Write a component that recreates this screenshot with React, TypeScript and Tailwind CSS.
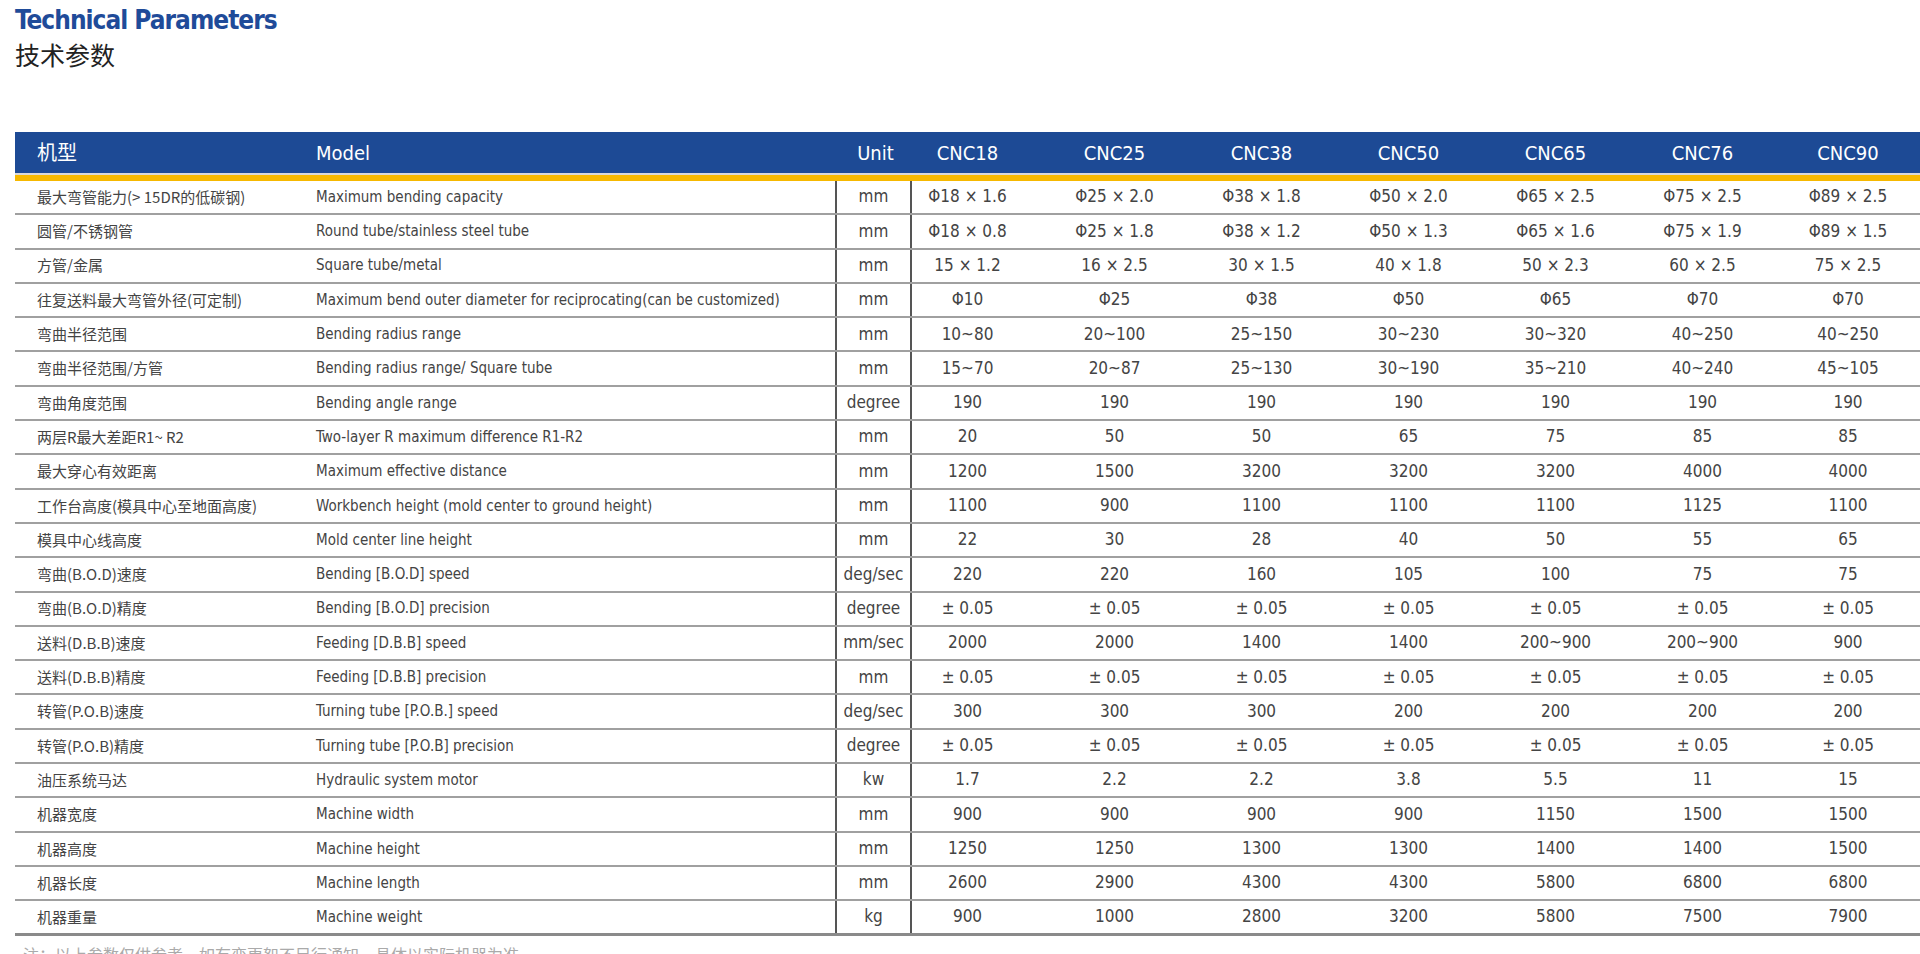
const cols = ['CNC18', 'CNC25', 'CNC38', 'CNC50', 'CNC65', 'CNC76', 'CNC90'];

const rows: [string, string, string, string[]][] = [
  ['最大弯管能力(> 15DR的低碳钢)', 'Maximum bending capacity', 'mm', ['Φ18 × 1.6', 'Φ25 × 2.0', 'Φ38 × 1.8', 'Φ50 × 2.0', 'Φ65 × 2.5', 'Φ75 × 2.5', 'Φ89 × 2.5']],
  ['圆管/不锈钢管', 'Round tube/stainless steel tube', 'mm', ['Φ18 × 0.8', 'Φ25 × 1.8', 'Φ38 × 1.2', 'Φ50 × 1.3', 'Φ65 × 1.6', 'Φ75 × 1.9', 'Φ89 × 1.5']],
  ['方管/金属', 'Square tube/metal', 'mm', ['15 × 1.2', '16 × 2.5', '30 × 1.5', '40 × 1.8', '50 × 2.3', '60 × 2.5', '75 × 2.5']],
  ['往复送料最大弯管外径(可定制)', 'Maximum bend outer diameter for reciprocating(can be customized)', 'mm', ['Φ10', 'Φ25', 'Φ38', 'Φ50', 'Φ65', 'Φ70', 'Φ70']],
  ['弯曲半径范围', 'Bending radius range', 'mm', ['10~80', '20~100', '25~150', '30~230', '30~320', '40~250', '40~250']],
  ['弯曲半径范围/方管', 'Bending radius range/ Square tube', 'mm', ['15~70', '20~87', '25~130', '30~190', '35~210', '40~240', '45~105']],
  ['弯曲角度范围', 'Bending angle range', 'degree', ['190', '190', '190', '190', '190', '190', '190']],
  ['两层R最大差距R1~ R2', 'Two-layer R maximum difference R1-R2', 'mm', ['20', '50', '50', '65', '75', '85', '85']],
  ['最大穿心有效距离', 'Maximum effective distance', 'mm', ['1200', '1500', '3200', '3200', '3200', '4000', '4000']],
  ['工作台高度(模具中心至地面高度)', 'Workbench height (mold center to ground height)', 'mm', ['1100', '900', '1100', '1100', '1100', '1125', '1100']],
  ['模具中心线高度', 'Mold center line height', 'mm', ['22', '30', '28', '40', '50', '55', '65']],
  ['弯曲(B.O.D)速度', 'Bending [B.O.D] speed', 'deg/sec', ['220', '220', '160', '105', '100', '75', '75']],
  ['弯曲(B.O.D)精度', 'Bending [B.O.D] precision', 'degree', ['± 0.05', '± 0.05', '± 0.05', '± 0.05', '± 0.05', '± 0.05', '± 0.05']],
  ['送料(D.B.B)速度', 'Feeding [D.B.B] speed', 'mm/sec', ['2000', '2000', '1400', '1400', '200~900', '200~900', '900']],
  ['送料(D.B.B)精度', 'Feeding [D.B.B] precision', 'mm', ['± 0.05', '± 0.05', '± 0.05', '± 0.05', '± 0.05', '± 0.05', '± 0.05']],
  ['转管(P.O.B)速度', 'Turning tube [P.O.B.] speed', 'deg/sec', ['300', '300', '300', '200', '200', '200', '200']],
  ['转管(P.O.B)精度', 'Turning tube [P.O.B] precision', 'degree', ['± 0.05', '± 0.05', '± 0.05', '± 0.05', '± 0.05', '± 0.05', '± 0.05']],
  ['油压系统马达', 'Hydraulic system motor', 'kw', ['1.7', '2.2', '2.2', '3.8', '5.5', '11', '15']],
  ['机器宽度', 'Machine width', 'mm', ['900', '900', '900', '900', '1150', '1500', '1500']],
  ['机器高度', 'Machine height', 'mm', ['1250', '1250', '1300', '1300', '1400', '1400', '1500']],
  ['机器长度', 'Machine length', 'mm', ['2600', '2900', '4300', '4300', '5800', '6800', '6800']],
  ['机器重量', 'Machine weight', 'kg', ['900', '1000', '2800', '3200', '5800', '7500', '7900']],
];

const grid = 'grid grid-cols-[301px_519px_77px_129px_147px_147px_147px_147px_147px_1fr]';
const font = { fontFamily: '"Liberation Sans Narrow", "DejaVu Sans Condensed", "Liberation Sans", "Noto Sans CJK SC", sans-serif' };

export default function App() {
  return (
    <div className="w-[1920px] h-[954px] overflow-hidden bg-white text-[#444]" style={font}>
      <div className="pl-[15px] pt-[4px]">
        <h1 className="text-[26px] font-bold leading-[32px] text-[#1f4b99] tracking-[-1px]" style={{ fontFamily: '"DejaVu Sans Condensed", "Liberation Sans", sans-serif' }}>Technical Parameters</h1>
        <h2 className="text-[25px] leading-[36px] text-[#222]" style={{ fontFamily: '"Noto Sans CJK SC", sans-serif' }}>技术参数</h2>
      </div>

      <div className="ml-[15px] mt-[60px]">
        <div className={`${grid} h-[41px] items-center bg-[#1d4a95] text-[20px] text-white`}>
          <div className="pl-[22px]">机型</div>
          <div>Model</div>
          <div className="text-center pl-[4px]">Unit</div>
          {cols.map((c, i) => (
            <div key={c} className={i === 0 ? 'text-center pr-[18px]' : 'text-center'}>{c}</div>
          ))}
        </div>
        <div className="h-[2px] bg-[#d8d8d8]" />
        <div className="h-[6px] bg-[#f6b800]" />

        {rows.map(([zh, en, unit, vals], r) => (
          <div key={r} className={`${grid} h-[34.3px] items-center text-[17px] ${r < rows.length - 1 ? 'border-b-2 border-[#a0a0a0]' : 'border-b-[3px] border-[#8a8a8a]'}`}>
            <div className="pl-[22px] text-[15px] whitespace-nowrap" style={{ fontFamily: '"Noto Sans CJK SC", sans-serif' }}>{zh}</div>
            <div className="whitespace-nowrap text-[15px]">{en}</div>
            <div className="h-full flex items-center justify-center border-l-2 border-r-2 border-[#555]">{unit}</div>
            {vals.map((v, i) => (
              <div key={i} className={i === 0 ? 'text-center pr-[18px]' : 'text-center'}>{v}</div>
            ))}
          </div>
        ))}

        <div className="pt-[8px] pl-[8px] text-[16px] text-[#aaa] whitespace-nowrap">注：以上参数仅供参考，如有变更恕不另行通知，具体以实际机器为准</div>
      </div>
    </div>
  );
}
